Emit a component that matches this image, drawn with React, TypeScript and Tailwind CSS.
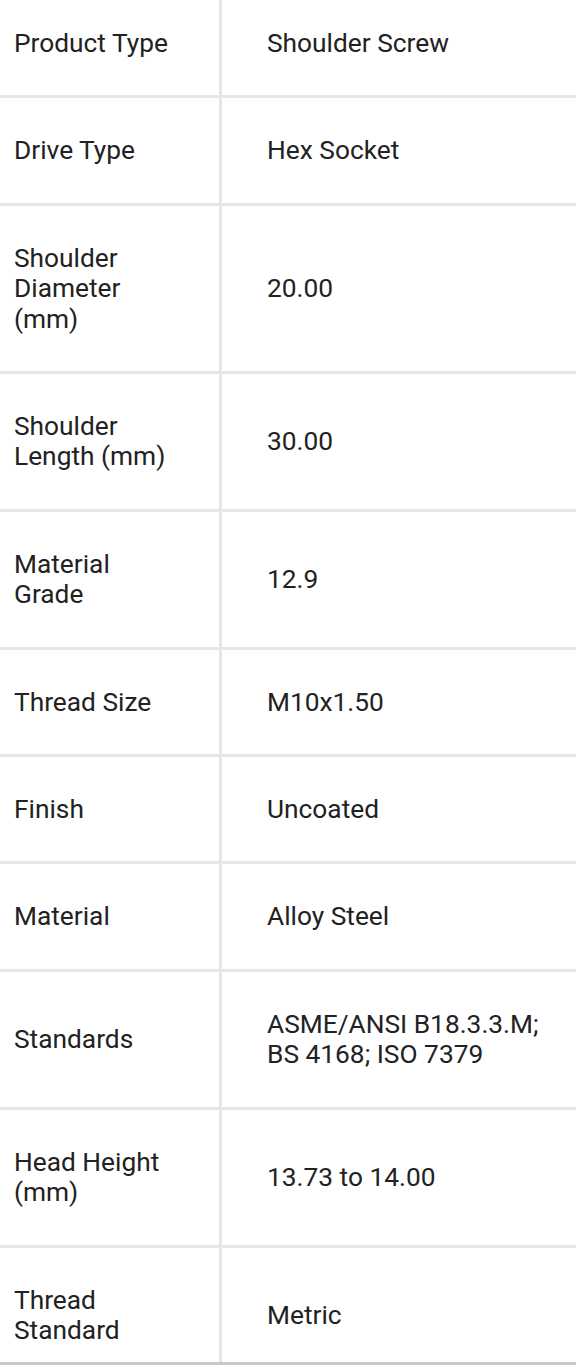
import React from "react";

const rows: [string, string][] = [
  ["Product Type", "Shoulder Screw"],
  ["Drive Type", "Hex Socket"],
  ["Shoulder Diameter (mm)", "20.00"],
  ["Shoulder Length (mm)", "30.00"],
  ["Material Grade", "12.9"],
  ["Thread Size", "M10x1.50"],
  ["Finish", "Uncoated"],
  ["Material", "Alloy Steel"],
  ["Standards", "ASME/ANSI B18.3.3.M; BS 4168; ISO 7379"],
  ["Head Height (mm)", "13.73 to 14.00"],
  ["Thread Standard", "Metric"],
];

export default function App() {
  return (
    <div
      className="w-[576px] h-[1365px] overflow-hidden bg-white border-b-[3px] border-[#c9c9cc] text-[#222222] text-[26.3px] leading-[30.4px]"
      style={{ fontFamily: "Roboto, 'Noto Sans', sans-serif" }}
    >
      <div className="-mt-[9px]">
        {rows.map(([k, v], i) => (
          <div key={i} className="flex border-b-[3px] border-[#e5e5ea]">
            <div className="w-[222px] shrink-0 border-r-[3px] border-[#e5e5ea] pl-[14px] pr-[44px] py-[37px] flex items-center">
              <span>{k}</span>
            </div>
            <div className="flex-1 pl-[45px] pr-[20px] py-[37px] flex items-center">
              <span>{v}</span>
            </div>
          </div>
        ))}
      </div>
    </div>
  );
}
